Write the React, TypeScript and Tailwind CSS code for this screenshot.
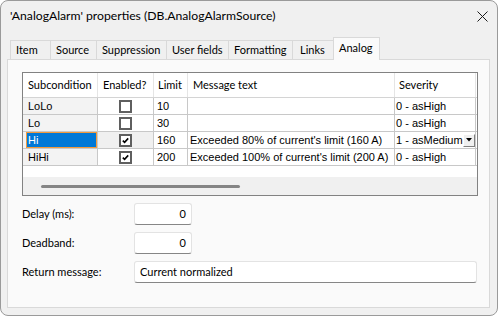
import React from "react"

type Row = {
    name: string
    enabled: boolean
    limit: string
    message: string
    severity: string
    selected?: boolean
}

const rows: Row[] = [
    { name: "LoLo", enabled: false, limit: "10", message: "", severity: "0 - asHigh" },
    { name: "Lo", enabled: false, limit: "30", message: "", severity: "0 - asHigh" },
    { name: "Hi", enabled: true, limit: "160", message: "Exceeded 80% of current's limit (160 A)", severity: "1 - asMedium", selected: true },
    { name: "HiHi", enabled: true, limit: "200", message: "Exceeded 100% of current's limit (200 A)", severity: "0 - asHigh" },
]

const tabs = [
    { label: "Item", w: "w-[40px]" },
    { label: "Source", w: "w-[46px]" },
    { label: "Suppression", w: "w-[70px]" },
    { label: "User fields", w: "w-[62px]" },
    { label: "Formatting", w: "w-[64px]" },
    { label: "Links", w: "w-[41px]" },
]

function CheckBox({ checked }: { checked: boolean }) {
    return (
        <div className="w-[13px] h-[13px] border-2 border-[#5f5f5f] bg-white flex items-center justify-center">
            {checked && (
                <svg width="9" height="9" viewBox="0 0 9 9">
                    <path d="M1.8 4.6 L3.6 6.4 L7.2 2.4" fill="none" stroke="#000" strokeWidth="1.6" />
                </svg>
            )}
        </div>
    )
}

function Field({ label, value, wide }: { label: string; value: string; wide?: boolean }) {
    return (
        <div className="flex items-center h-[22px]">
            <div className="w-[112px]">{label}</div>
            <div
                className={`h-[22px] bg-white border border-[#e3e3e3] border-b-[#868686] rounded-[3px] flex items-center ${wide ? "w-[343px] justify-start pl-[5px]" : "w-[58px] justify-end pr-[5px]"}`}
            >
                {value}
            </div>
        </div>
    )
}

export default function App() {
    return (
        <div className="w-[499px] h-[318px] bg-white font-['Lato',sans-serif] text-[11px] text-black">
            <div className="w-[498px] h-[316px] rounded-[8px] border border-[#9a9a9a] bg-[#f0f0f0] flex flex-col overflow-hidden">
                {/* title bar */}
                <div className="h-[30px] flex items-center justify-between pl-[9px] pr-[9px]">
                    <span className="text-[12.2px]">'AnalogAlarm' properties (DB.AnalogAlarmSource)</span>
                    <svg width="11" height="11" viewBox="0 0 11 11">
                        <path d="M0.5 0.5 L10.5 10.5 M10.5 0.5 L0.5 10.5" stroke="#1b1b1b" strokeWidth="1" />
                    </svg>
                </div>

                {/* tabs */}
                <div className="mt-[6px] ml-[9px] flex items-end h-[22px]">
                    {tabs.map((t) => (
                        <div
                            key={t.label}
                            className={`${t.w} h-[19px] border-l border-t border-[#d9d9d9] bg-[#f0f0f0] flex items-center ${t.label === "Links" ? "pl-[7px]" : "pl-[5px]"}`}
                        >
                            {t.label}
                        </div>
                    ))}
                    <div className="relative z-10 w-[47px] h-[23px] -mb-px border-l border-t border-r border-[#d9d9d9] bg-[#fafafa] flex items-center pl-[5px] pb-[2px]">
                        Analog
                    </div>
                </div>

                {/* panel */}
                <div className="ml-[6px] w-[483px] h-[249px] border border-[#d9d9d9] bg-[#fafafa] pt-[12px] pl-[14px]">
                    {/* grid */}
                    <div className="w-[456px] h-[124px] border border-[#828282] bg-white flex flex-col font-['Liberation_Sans',Arial,sans-serif]">
                        <div className="flex h-[25px] border-b border-[#d4d4d4] font-['Lato',sans-serif]">
                            <div className="w-[75px] border-r border-[#e5e5e5] pl-[5px] flex items-center">Subcondition</div>
                            <div className="w-[56px] border-r border-[#e5e5e5] pl-[5px] flex items-center">Enabled?</div>
                            <div className="w-[34px] border-r border-[#e5e5e5] pl-[4px] flex items-center">Limit</div>
                            <div className="w-[207px] border-r border-[#e5e5e5] pl-[5px] flex items-center">Message text</div>
                            <div className="w-[81px] border-r border-[#e5e5e5] pl-[4px] flex items-center">Severity</div>
                        </div>
                        {rows.map((r) => (
                            <div key={r.name} className="flex h-[17px] border-b border-[#c8c8c8] whitespace-nowrap">
                                <div className="w-[75px] border-r border-[#c8c8c8] bg-[#f3f3f3] flex items-stretch">
                                    {r.selected ? (
                                        <div className="ml-[3px] flex-1 bg-[#0078d7] border border-[#f29a3c] text-white pl-[1px] flex items-center">
                                            {r.name}
                                        </div>
                                    ) : (
                                        <div className="pl-[5px] flex items-center">{r.name}</div>
                                    )}
                                </div>
                                <div className={`w-[56px] border-r border-[#c8c8c8] flex items-center justify-center ${r.selected ? "bg-[#f0f0f0]" : ""}`}>
                                    <CheckBox checked={r.enabled} />
                                </div>
                                <div className="w-[34px] border-r border-[#c8c8c8] pl-[3px] flex items-center">{r.limit}</div>
                                <div className="w-[207px] border-r border-[#c8c8c8] pl-[2px] flex items-center overflow-hidden">{r.message}</div>
                                <div className="w-[81px] border-r border-[#c8c8c8] pl-[1px] flex items-center justify-between">
                                    <span>{r.severity}</span>
                                    {r.selected && (
                                        <div className="shrink-0 mr-[1px] w-[12px] h-[13px] bg-[#f0f0f0] border border-t-white border-l-white border-b-[#808080] border-r-[#808080] flex items-center justify-center">
                                            <svg width="6" height="4" viewBox="0 0 6 4">
                                                <path d="M0 0 L6 0 L3 3.5 Z" fill="#000" />
                                            </svg>
                                        </div>
                                    )}
                                </div>
                            </div>
                        ))}
                        <div className="h-[11px]" />
                        <div className="h-[18px] bg-[#f0f0f0] flex items-center pl-[18px]">
                            <div className="w-[199px] h-[3px] rounded-full bg-[#858585]" />
                        </div>
                    </div>

                    {/* fields */}
                    <div className="mt-[7px] flex flex-col gap-[7px]">
                        <Field label="Delay (ms):" value="0" />
                        <Field label="Deadband:" value="0" />
                        <Field label="Return message:" value="Current normalized" wide />
                    </div>
                </div>
            </div>
        </div>
    )
}
